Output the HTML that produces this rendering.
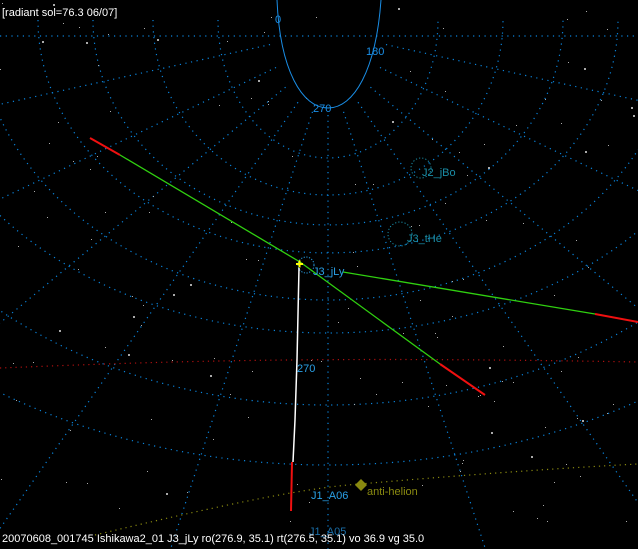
<!DOCTYPE html>
<html><head><meta charset="utf-8"><style>
html,body{margin:0;padding:0;background:#000;width:638px;height:549px;overflow:hidden}
svg{position:absolute;left:0;top:0;display:block}
.t{font-family:"Liberation Sans","Noto Sans CJK JP",sans-serif;font-size:11px}
</style></head><body>
<svg id="s" width="638" height="549" viewBox="0 0 638 549" xmlns="http://www.w3.org/2000/svg">
<g id="grid" fill="none" stroke="#0a84dc" stroke-width="1.2" stroke-dasharray="1.2 4.5"></g>
<g id="stars" fill="#aaa"></g>
<path d="M277,0 C280,70 302,108 328,108 C354,108 376,70 381,0" fill="none" stroke="#1a8ee6" stroke-width="1"/>
<path d="M0,368 C150,362 300,356 638,362" fill="none" stroke="#b01010" stroke-width="1.2" stroke-dasharray="1.2 4"/>
<path d="M95,535 C200,510 300,488 360,484 C450,476 560,468 638,464" fill="none" stroke="#8a8a10" stroke-width="1.2" stroke-dasharray="1.2 4"/>
<circle cx="421" cy="168" r="10" fill="none" stroke="#1a8ea8" stroke-dasharray="1.2 2"/>
<circle cx="400" cy="234" r="12" fill="none" stroke="#1a8ea8" stroke-dasharray="1.2 2"/>
<circle cx="306" cy="265" r="8" fill="none" stroke="#2aa0e6" stroke-dasharray="1.2 1.5"/>
<line x1="90" y1="138" x2="120" y2="155" stroke="#f01010" stroke-width="2"/>
<line x1="120" y1="155" x2="300" y2="262" stroke="#30d010" stroke-width="1.3"/>
<line x1="300" y1="262" x2="440" y2="364" stroke="#30d010" stroke-width="1.3"/>
<line x1="440" y1="364" x2="485" y2="395" stroke="#f01010" stroke-width="2"/>
<line x1="343" y1="272" x2="595" y2="314" stroke="#30d010" stroke-width="1.3"/>
<line x1="595" y1="314" x2="638" y2="322" stroke="#f01010" stroke-width="2"/>
<polyline points="299,268 297,360 295,420 293,462" fill="none" stroke="#fff" stroke-width="1.5"/>
<line x1="292" y1="462" x2="291" y2="511" stroke="#f01010" stroke-width="2"/>
<path d="M296,264 h7 M299.5,260.5 v7" stroke="#ff0" stroke-width="2"/>
<path d="M361,479 l6,6 -6,6 -6,-6z" fill="#8a8a10"/>
<text x="2" y="16" class="t" fill="#fff">[radiant sol=76.3 06/07]</text>
<text x="275" y="23" class="t" fill="#1a8ee6">0</text>
<text x="366" y="55" class="t" fill="#1a8ee6">180</text>
<text x="313" y="112" class="t" fill="#1a8ee6">270</text>
<text x="422" y="176" class="t" fill="#1a8ea8">J2_jBo</text>
<text x="407" y="242" class="t" fill="#1a8ea8">J3_tHe</text>
<text x="313" y="275" class="t" fill="#2aa0e6">J3_jLy</text>
<text x="297" y="372" class="t" fill="#2aa0e6">270</text>
<text x="311" y="499" class="t" fill="#2aa0e6">J1_A06</text>
<text x="367" y="495" class="t" fill="#8a8a10">anti-helion</text>
<text x="309" y="535" class="t" fill="#1a6ea8">J1_A05</text>
<rect x="0" y="530" width="638" height="19" fill="#000" opacity="0"/>
<text x="2" y="542" class="t" fill="#fff">20070608_001745 Ishikawa2_01  J3_jLy ro(276.9, 35.1) rt(276.5, 35.1) vo 36.9 vg 35.0</text>
</svg>
<script>
var g=document.getElementById('grid'),ns='http://www.w3.org/2000/svg';
function p(d){var e=document.createElementNS(ns,'path');e.setAttribute('d',d);g.appendChild(e);}
var cx=328,cy=20;
[[110,138],[175,175],[235,205],[290,233],[350,280],[420,313],[500,385],[600,445]].forEach(function(r){
 p('M'+(cx-r[0])+','+cy+' A'+r[0]+','+r[1]+' 0 0 0 '+(cx+r[0])+','+cy);
});
p('M0,36 L638,36');
for(var a=-15;a<=195;a+=15){if(a==0||a==180)continue;var t=a*Math.PI/180;var x2=cx+Math.cos(t)*900*1.15,y2=cy+Math.sin(t)*900;p('M'+(cx+Math.cos(t)*60)+','+(cy+Math.sin(t)*95)+' L'+x2+','+y2);}
var s=document.getElementById('stars'),seed=7;
function rnd(){seed=(seed*16807)%2147483647;return seed/2147483647;}
for(var i=0;i<150;i++){var c=document.createElementNS(ns,'rect');var z=rnd()<0.15?2:1;c.setAttribute('x',Math.floor(rnd()*636));c.setAttribute('y',Math.floor(rnd()*525));c.setAttribute('width',z);c.setAttribute('height',z);s.appendChild(c);}
</script>
</body></html>
